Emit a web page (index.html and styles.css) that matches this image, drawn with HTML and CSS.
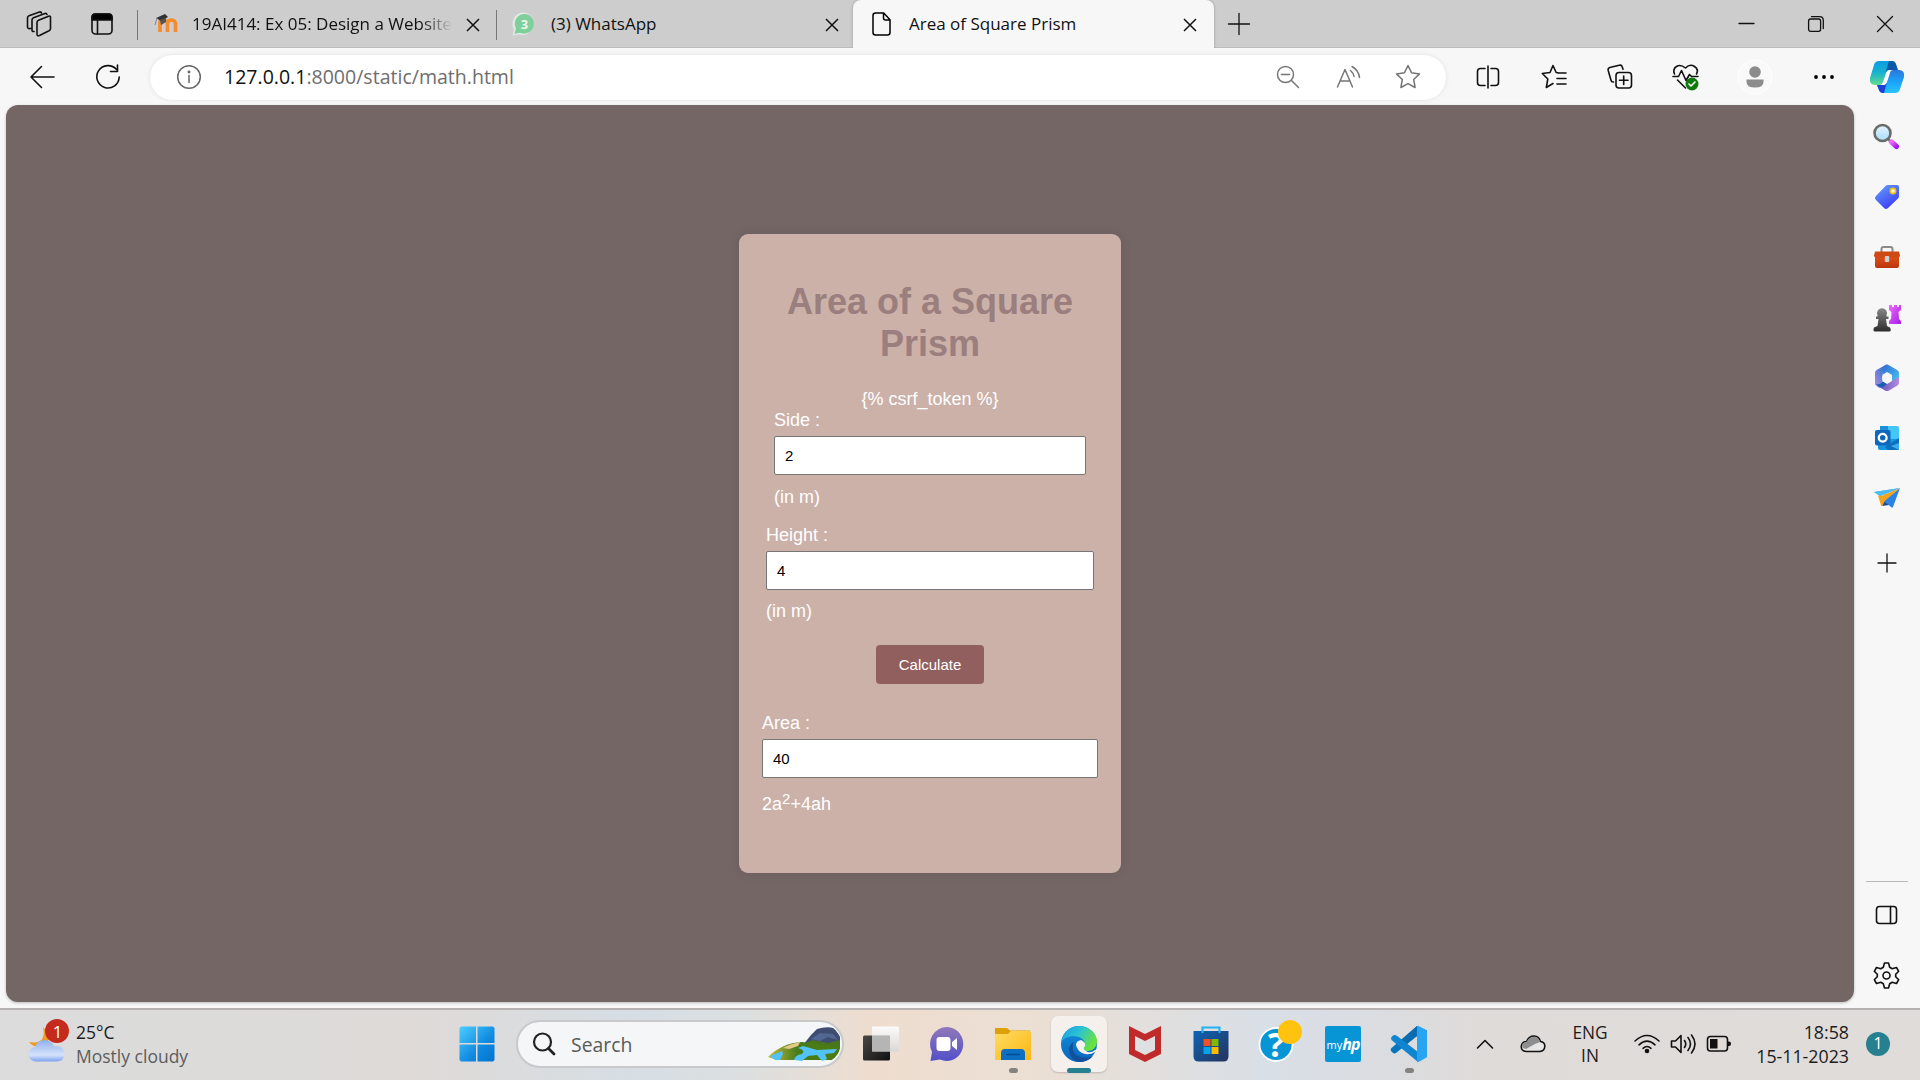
FILE: index.html
```html
<!DOCTYPE html>
<html lang="en">
<head>
<meta charset="utf-8">
<title>Area of Square Prism</title>
<link rel="stylesheet" href="styles.css">
</head>
<body>
<div class="screen">
  <header class="tabbar">
    <div class="cell"><svg width="26" height="26" viewBox="0 0 26 26" class="line"><path d="M11 11.500q0-1.500 1.500-2.200l10-4q2-.8 2 1.200v11q0 1.500-1.500 2.300l-9.500 4.700q-2.500 1-2.500-1.500z"/><path d="M8 20.500q-2 .3-2-1.500V9q0-1.500 1.500-2.200L19 2.500q1.500-.5 2 1M4.500 17.500Q1.500 18 1.500 16V7q0-1.500 1.500-2.200L13.500 1q1.500-.5 2 1"/></svg></div>
    <div class="cell"><svg width="24" height="24" viewBox="0 0 24 24" class="line"><rect x="2" y="2" width="20" height="20" rx="3.500"/><path d="M2 8V5q0-3 3-3h14q3 0 3 3v3z" fill="#000"/><path d="M7.500 8v14"/></svg></div>
    <div class="tab tab-first">
      <svg class="tab-icon" width="24" height="20" viewBox="0 0 24 20"><path d="M6 18V8q0-2 3-2t4.500 2v10M13.500 9q1-3 4-3t4 3v9" fill="none" stroke="#f58b2c" stroke-width="3.600"/><path d="M2 4l9-4 3 3-7 4z" fill="#333"/><path d="M3 4L1 11" stroke="#888" fill="none"/><path d="M6 6l1 5 5-3V4z" fill="#555"/></svg>
      <span class="tab-title fade">19AI414: Ex 05: Design a Website</span>
      <svg class="tab-close" width="14" height="14" viewBox="0 0 14 14"><path d="M1 1l12 12M13 1L1 13"/></svg>
    </div>
    <div class="tab tab-second">
      <svg class="tab-icon" width="24" height="24" viewBox="0 0 24 24"><path d="M12 .5A11.300 11.300 0 1 1 7 22.500L.5 23.500 2 17.500A11.300 11.300 0 0 1 12 .5z" fill="#e2e8e4"/><path d="M12.500 2A9.800 9.800 0 1 1 8 20.700L2.500 22 4 16.500A9.800 9.800 0 0 1 12.500 2z" fill="#7fcf9b"/><text x="12.500" y="17" class="wa-count">3</text></svg>
      <span class="tab-title">(3) WhatsApp</span>
      <svg class="tab-close" width="14" height="14" viewBox="0 0 14 14"><path d="M1 1l12 12M13 1L1 13"/></svg>
    </div>
    <div class="tab tab-active">
      <svg class="tab-icon" width="20" height="24" viewBox="0 0 20 24"><path d="M3.500 1h8.200L18 7.800v12.700q0 2.500-2.500 2.500h-12Q1 23 1 20.500v-17Q1 1 3.500 1zM11.500 1v5q0 2 2 2H18" fill="none" stroke="#000" stroke-width="1.500"/></svg>
      <span class="tab-title">Area of Square Prism</span>
      <svg class="tab-close" width="14" height="14" viewBox="0 0 14 14"><path d="M1 1l12 12M13 1L1 13"/></svg>
    </div>
    <div class="cell"><svg width="22" height="22" viewBox="0 0 22 22" class="line thin"><path d="M11 .5v21M.5 11h21"/></svg></div>
    <div></div>
    <div class="cell"><svg width="16" height="16" viewBox="0 0 16 16" class="line thin"><path d="M0 7.500h15"/></svg></div>
    <div class="cell"><svg width="16" height="16" viewBox="0 0 16 16" class="line thin"><rect x=".6" y="3" width="12" height="12.300" rx="2"/><path d="M3.500 .7h8q3.800 0 3.800 3.800v8"/></svg></div>
    <div class="cell"><svg width="16" height="16" viewBox="0 0 16 16" class="line thin"><path d="M.5.5l15 15M15.500.5l-15 15"/></svg></div>
  </header>

  <nav class="toolbar">
    <div class="cell"><svg width="26" height="24" viewBox="0 0 26 24" class="line"><path d="M12.500 1.500L2 12l10.500 10.500M2 12h23"/></svg></div>
    <div class="cell"><svg width="26" height="26" viewBox="0 0 26 26" class="line"><path d="M21.500 5.500A11.200 11.200 0 1 0 24.200 13M22.500 1v6.500h-7"/></svg></div>
    <div></div>
    <div class="address">
      <svg class="info" width="26" height="26" viewBox="0 0 26 26"><circle cx="13" cy="13" r="11.300"/><path d="M13 11.500v7"/><circle cx="13" cy="8" r=".7"/></svg>
      <span class="url"><b>127.0.0.1</b>:8000/static/math.html</span>
      <svg width="24" height="24" viewBox="0 0 24 24"><circle cx="9.500" cy="9.500" r="8"/><path d="M5.500 9.500h8M15.500 15.500l7 7"/></svg>
      <svg width="26" height="24" viewBox="0 0 26 24"><path d="M1.500 22L9 4.500 16.500 22M4 16h10M14.500 5.500q3 2.500 3.500 6M16 1.500q6.500 3.500 7.500 11"/></svg>
      <svg class="fav" width="26" height="26" viewBox="0 0 26 26"><path d="M13 1.500l3.500 7.200 8 1.200-5.800 5.600 1.400 8-7.100-3.800-7.100 3.800 1.400-8L1.500 9.900l8-1.200z"/></svg>
    </div>
    <div></div>
    <div class="cell"><svg width="24" height="24" viewBox="0 0 24 24" class="line"><path d="M9 3.500H4.500Q1.500 3.500 1.500 6.500v11q0 3 3 3H9M15 3.500h4.500q3 0 3 3v11q0 3-3 3H15M12 1v22"/></svg></div>
    <div class="cell"><svg width="26" height="26" viewBox="0 0 26 26" class="line"><path d="M17.500 9l-2.300-.5L12 1.500l-3 7-7.700 1 5.500 5.500-1.500 8.500L12 19.500M18 9h7M16 14.500h9M16 20h9"/></svg></div>
    <div class="cell"><svg width="26" height="26" viewBox="0 0 26 26" class="line"><rect x="9" y="8.500" width="15.500" height="15.500" rx="3"/><path d="M16.700 12v8.500M12.500 16.200H21M6.500 18q-2 .2-2.500-1.800L1.200 6.500q-.5-2.200 1.500-3l9.500-2.300q2.500-.5 3 1.500l.8 2.500"/></svg></div>
    <div class="cell"><svg width="28" height="28" viewBox="0 0 28 28" class="line"><path d="M2.500 11Q.5 6 4.500 3.500T13.500 5Q18 .5 22.500 3.500t2 7.500M1 13.500h5.500l3-6 4.500 10 3.500-6 2 2H26M5.500 17l8 8"/><circle cx="20" cy="21" r="6.500" fill="#12790f" stroke="none"/><path d="M17 21l2 2 4-4" stroke="#fff"/></svg></div>
    <div class="cell"><svg width="36" height="36" viewBox="0 0 36 36"><circle cx="18" cy="18" r="17" fill="#f9f9f9" stroke="#fff"/><circle cx="18" cy="13" r="5.800" fill="#8c8c8c"/><path d="M9.500 20.500h17v2.500q0 5.500-8.500 5.500T9.500 23z" fill="#8c8c8c"/></svg></div>
    <div class="cell"><svg width="22" height="6" viewBox="0 0 22 6"><circle cx="3" cy="3" r="1.900"/><circle cx="11" cy="3" r="1.900"/><circle cx="19" cy="3" r="1.900"/></svg></div>
    <div class="cell"><svg width="36" height="34" viewBox="0 0 36 34">
      <defs><linearGradient id="cpA" x1="0" y1="0" x2="0" y2="1"><stop offset="0" stop-color="#0b9de0"/><stop offset=".5" stop-color="#18b3cf"/><stop offset="1" stop-color="#63dc8b"/></linearGradient><linearGradient id="cpB" x1="0" y1="0" x2="0" y2="1"><stop offset="0" stop-color="#2d76dc"/><stop offset=".5" stop-color="#1aa2fa"/><stop offset="1" stop-color="#29c2ff"/></linearGradient></defs>
      <path d="M10 1h12q3 0 4 3l2 6h-8L15 25H6q-6 0-5-7L5 5q1-4 5-4z" fill="url(#cpA)"/>
      <path d="M20 1h3q3 0 4 3l2 6h-9q-3 0-4 4z" fill="#0b58a8"/>
      <path d="M26 33H14q-3 0-4-3l-2-5h8l5-15h9q6 0 5 7l-4 12q-1 4-5 4z" fill="url(#cpB)"/>
      <path d="M8 25h6q3 0 4-3l-3 11h-1q-3 0-4-3z" fill="#1b43d8"/>
      <path d="M22 10h-2q-2 0-3 3l-3 9q-1 3-3 3h4q2 0 3-3l3-9q.500-3 3-3z" fill="#fff"/></svg></div>
  </nav>

  <div class="middle">
    <main class="page">
      <form class="card">
        <h1>Area of a Square<br>Prism</h1>
        <div class="token">{% csrf_token %}</div>
        <div class="field side"><label for="a">Side :</label><input id="a" type="text" value="2"><span>(in m)</span></div>
        <div class="field height"><label for="h">Height :</label><input id="h" type="text" value="4"><span>(in m)</span></div>
        <button type="button">Calculate</button>
        <div class="field area"><label for="r">Area :</label><input id="r" type="text" value="40"><span>2a<sup>2</sup>+4ah</span></div>
      </form>
    </main>
    <aside class="sidebar">
      <svg width="28" height="28" viewBox="0 0 28 28"><defs><linearGradient id="pu" x1="0" y1="0" x2="1" y2="1"><stop offset="0" stop-color="#f06bfa"/><stop offset="1" stop-color="#a31de8"/></linearGradient><linearGradient id="lens" x1="0" y1="0" x2="0" y2="1"><stop offset="0" stop-color="#e4f4ff"/><stop offset="1" stop-color="#a9dbfa"/></linearGradient></defs><path d="M15 16l3 3" stroke="#777" stroke-width="2.500"/><circle cx="9.500" cy="10" r="8" fill="url(#lens)" stroke="#6a6a66" stroke-width="2.600"/><path d="M18.500 19l5 4.500" stroke="url(#pu)" stroke-width="5.200" stroke-linecap="round"/></svg>
      <svg width="28" height="28" viewBox="0 0 28 28"><defs><linearGradient id="tag" x1="0" y1="0" x2=".6" y2="1"><stop offset="0" stop-color="#62a6ff"/><stop offset="1" stop-color="#3f3cf5"/></linearGradient></defs><path d="M15 2h9q2 0 2 2v9q0 1.500-1 2.500L15 25q-2 2-4 0l-8-8q-2-2 0-4L12.500 3q1-1 2.500-1z" fill="url(#tag)"/><circle cx="20" cy="8" r="2.600" fill="#fff" stroke="#f4c20d" stroke-width="1.700"/></svg>
      <svg width="30" height="28" viewBox="0 0 30 28"><defs><linearGradient id="tb" x1="0" y1="0" x2="0" y2="1"><stop offset="0" stop-color="#e4521a"/><stop offset="1" stop-color="#b9350d"/></linearGradient></defs><path d="M9.500 9V6q0-2 2-2h7q2 0 2 2v3" fill="none" stroke="#8a8a8a" stroke-width="2"/><rect x="3" y="12" width="24" height="13" rx="2" fill="url(#tb)"/><path d="M3 8.500h24l1 4q0 2-2 2H4q-2 0-2-2z" fill="#cf4a13"/><rect x="12.800" y="13" width="4.400" height="6" rx="1" fill="#d0d0d0"/></svg>
      <svg width="30" height="30" viewBox="0 0 30 30"><defs><linearGradient id="pawn" x1="0" y1="0" x2="0" y2="1"><stop offset="0" stop-color="#888"/><stop offset="1" stop-color="#2c2c2c"/></linearGradient></defs><path d="M17 2h3v2h2V2h3v2h2V2h2v5l-2.500 2 .5 7 2 2v3H17v-3l2-2 .500-7L17 7z" fill="url(#pu)"/><path d="M5.500 13.500V12a4.900 4.900 0 1 1 9 0v1.500h2v2.500h-2.500l1 7 3 1.500q2 4-1 4H3q-2.500 0-1-4l3.500-1.500 1-7H4v-2.500z" fill="url(#pawn)"/></svg>
      <svg width="28" height="30" viewBox="0 0 28 30"><defs><linearGradient id="m3a" x1="0" y1="1" x2="1" y2="0"><stop offset="0" stop-color="#b48be0"/><stop offset=".5" stop-color="#5b7fd6"/><stop offset="1" stop-color="#2a63c4"/></linearGradient><linearGradient id="m3b" x1="0" y1="0" x2="1" y2="1"><stop offset="0" stop-color="#2d6fd0"/><stop offset="1" stop-color="#4fc8f5"/></linearGradient><linearGradient id="m3c" x1="0" y1="0" x2="1" y2="0"><stop offset="0" stop-color="#5c4fb4"/><stop offset="1" stop-color="#b58ade"/></linearGradient></defs><path d="M2 9.500q0-1.500 1.500-2.500l9-5q1.500-.8 3 0L9.500 10v12l-3 3-3-2Q2 22 2 20.500z" fill="url(#m3a)"/><path d="M12 2.300q2-1 4 0l8.500 5Q26 8.200 26 10v9q0 2-1.500 2.500L19 18v-6l-5-3-4.500 3V6z" fill="url(#m3b)"/><path d="M26 19.500q0 2-1.500 3l-8.500 5q-2 1-4 0l-8-5q3 1 5.500-1.500L14 21l5-3 7-4z" fill="url(#m3c)"/><path d="M3 21q4 1 7-2.500l4 2.500-4.500 3.500q-4 0-6.500-3.500z" fill="#1c5fb8"/><circle cx="14" cy="15" r="4.900" fill="#f7f7f7"/></svg>
      <svg width="28" height="28" viewBox="0 0 28 28"><path d="M7 2h17q2 0 2 2v11H7z" fill="#42c6f5"/><path d="M7 2h8v6H7z" fill="#1c8fd9"/><path d="M5 15h21v11H7q-2 0-2-2z" fill="#1795df"/><path d="M26 14v12H15l-3-3z" fill="#0b6fc0"/><path d="M18 22l8 4v-7z" fill="#39aee8"/><rect x="2" y="6" width="15.500" height="15.500" rx="2" fill="#0d68bd"/><circle cx="9.700" cy="13.800" r="3.900" fill="none" stroke="#fff" stroke-width="2.300"/></svg>
      <svg width="28" height="22" viewBox="0 0 28 22"><path d="M1 5L27 1 7 9z" fill="#49b9f2"/><path d="M27 1L20 20q-1 1-2 0l-7-6z" fill="#2b83e3"/><path d="M11 14l5 4-7 1z" fill="#164e9f"/><path d="M5 8.500l3 10q.5 1.500 1.500 0l2.500-5L27 1 8 9z" fill="#f2a31a"/><path d="M1 5l6 4L27 1z" fill="#4bbcf0"/></svg>
      <svg class="line thin add" width="20" height="20" viewBox="0 0 20 20"><path d="M10 1v18M1 10h18"/></svg>
      <hr>
      <svg class="line panel" width="24" height="20" viewBox="0 0 24 20"><rect x="1.500" y="1.500" width="20" height="17" rx="3"/><path d="M15.500 1.500v17"/></svg>
      <svg class="line gear" width="28" height="28" viewBox="0 0 28 28"><path d="M11.500 2h4l1.200 4.200 2.500 1.500 4.300-1.200 2.200 3.800-3 3v2.400l3 3-2.200 3.800-4.300-1.200-2.500 1.500-1.200 4.200h-4l-1.200-4.200-2.500-1.500-4.300 1.200-2.200-3.800 3-3v-2.400l-3-3 2.200-3.800 4.300 1.200 2.500-1.500z" stroke-linejoin="round"/><circle cx="13.500" cy="14.500" r="3.500"/></svg>
    </aside>
  </div>

  <footer class="taskbar">
    <div class="weather">
      <svg width="44" height="46" viewBox="0 0 44 46"><defs><linearGradient id="cl" x1="0" y1="0" x2="0" y2="1"><stop offset="0" stop-color="#8fb1ef"/><stop offset=".7" stop-color="#d5e2fb"/><stop offset="1" stop-color="#7ba2ee"/></linearGradient></defs><path d="M15 9q4 18-14 15 5 7 16 4l6-10z" fill="#ef9a24"/><path d="M8 43.500A7 7 0 0 1 7.500 29q1-7 9.500-7 6 0 9 6 10-1 10.500 7.500 0 8-8 8z" fill="url(#cl)"/><circle cx="29" cy="13" r="12" fill="#c42b1c"/><text x="29.500" y="19.500" class="badge-text">1</text></svg>
      <div class="weather-text"><span>25°C</span><span class="muted">Mostly cloudy</span></div>
    </div>
    <div class="start"><svg width="36" height="36" viewBox="0 0 36 36"><defs><linearGradient id="win" gradientUnits="userSpaceOnUse" x1="0" y1="0" x2="36" y2="36"><stop offset="0" stop-color="#4dcfff"/><stop offset=".6" stop-color="#1089e0"/><stop offset="1" stop-color="#0073d0"/></linearGradient></defs><path d="M2 .5h15v16.500H.5V2zM18.500.5H34L35.500 2v15h-17zM.5 18.500H17v17H2L.5 34zM18.500 18.500h17V34L34 35.500H18.500z" fill="url(#win)"/></svg></div>
    <div class="search">
      <svg width="24" height="24" viewBox="0 0 24 24"><circle cx="10.500" cy="10" r="8.500" fill="none" stroke="#222" stroke-width="2.200"/><path d="M16.500 16.500l5.500 5.500" stroke="#222" stroke-width="2.800" stroke-linecap="round"/></svg>
      <span>Search</span>
      <svg class="landscape" width="74" height="38" viewBox="0 0 74 38"><defs><linearGradient id="grass" x1="0" y1="0" x2="1" y2="0"><stop offset="0" stop-color="#c8b940"/><stop offset=".4" stop-color="#487d1a"/><stop offset="1" stop-color="#4c7a12"/></linearGradient></defs><path d="M36 20L44 10 50 4q9-3 17-1l6 8v12z" fill="#3f4d73"/><path d="M44 14l9-6 13 1 5 6-10-3-8 4z" fill="#536795"/><path d="M33 20l13-5 15 3 12-3v9z" fill="#49751e"/><path d="M1 32q14-14 34-15l38 5q0 7-7 13H10z" fill="url(#grass)"/><path d="M3 31l12-5 1 3-3 6H8zM27 35q1-5 8-6 4-4-4-6l5-2 14 4 20-1-3 4-9 1 2 5-5 2-5-6-9 1-6 5z" fill="#51c3f7"/><path d="M16 23q7-4 17-6l-2 4-9 3z" fill="#e4c98b"/></svg>
    </div>
    <div class="apps">
      <div class="app"><svg width="38" height="38" viewBox="0 0 38 38"><defs><linearGradient id="dk" x1="0" y1="0" x2="1" y2="1"><stop offset="0" stop-color="#4a4845"/><stop offset="1" stop-color="#111"/></linearGradient><linearGradient id="lt" x1="0" y1="0" x2="0" y2="1"><stop offset="0" stop-color="#fff"/><stop offset="1" stop-color="#d8d8d8"/></linearGradient></defs><rect x="1" y="10.500" width="27" height="25" rx="1.500" fill="url(#dk)"/><rect x="10" y="1.500" width="27" height="25" rx="1" fill="url(#lt)" opacity=".88"/><rect x="10" y="10.500" width="18" height="16" fill="#b5b5b5"/></svg></div>
      <div class="app"><svg width="36" height="36" viewBox="0 0 36 36"><defs><linearGradient id="chat" x1="0" y1="0" x2="0" y2="1"><stop offset="0" stop-color="#9078b8"/><stop offset="1" stop-color="#5350c8"/></linearGradient></defs><path d="M18 1a16.500 17 0 1 1-7 32.500L1.500 35 3 26A17 17 0 0 1 18 1z" fill="url(#chat)"/><rect x="7.500" y="11" width="14" height="14" rx="3" fill="#fff"/><path d="M23 16l5-4v12l-5-4z" fill="#fff"/></svg></div>
      <div class="app"><svg width="36" height="36" viewBox="0 0 36 36"><defs><linearGradient id="fd" x1="0" y1="0" x2="1" y2="1"><stop offset="0" stop-color="#ffdc62"/><stop offset="1" stop-color="#fbb614"/></linearGradient></defs><path d="M0 2h12l3 2.500h20v6H0z" fill="#dda006"/><path d="M0 8h13l3-3h18q2 0 2 2v27H0z" fill="url(#fd)"/><path d="M6 34V27q0-4 4-4h16q4 0 4 4v7z" fill="#0d6fc4"/><path d="M11 28.500h14" stroke="#064d8d" stroke-width="1.500"/></svg><i class="mark"></i></div>
      <div class="app current"><svg width="38" height="38" viewBox="0 0 38 38"><defs><linearGradient id="e1" x1="0" y1="0" x2="1" y2=".5"><stop offset="0" stop-color="#199ae0"/><stop offset=".5" stop-color="#2cc3d2"/><stop offset="1" stop-color="#6ae33b"/></linearGradient><linearGradient id="e2" x1="0" y1="0" x2="0" y2="1"><stop offset="0" stop-color="#1591df"/><stop offset="1" stop-color="#0864bb"/></linearGradient></defs><circle cx="19" cy="19" r="18" fill="url(#e2)"/><path d="M1.500 17C3 6 11 1 19 1c10 0 18 7 18 15 0 6-4 10-9 10-4 0-6-2-5-4 3-3 2-8-4-10-7-2-15 0-17.500 5z" fill="url(#e1)"/><path d="M13 19q-2 10 7 13 8 2 13-1-5 6-14 6Q10 35 9 25q0-7 8-10-4 1-4 4z" fill="#12509b"/><path d="M35 27q-6 4-13 1-5-3-6-8 0-4 5-5 5 2 4 6-3 3 1 5 4 3 9-1l3-1z" fill="#f5f1ec"/></svg><i class="mark"></i></div>
      <div class="app"><svg width="34" height="38" viewBox="0 0 34 38"><path d="M1 1l16 8 16-8v28l-16 8-16-8z" fill="#bf2b2b"/><path d="M7 11l10 5 10-5v14l-10 5-10-5z" fill="#dfe0e1"/></svg></div>
      <div class="app"><svg width="36" height="36" viewBox="0 0 36 36"><defs><linearGradient id="st" x1="0" y1="0" x2="1" y2="1"><stop offset="0" stop-color="#0c65b5"/><stop offset="1" stop-color="#26335c"/></linearGradient></defs><path d="M9.500 7V1.500h17V7" fill="none" stroke="#24b2f2" stroke-width="2.200"/><path d="M.5 5h35v25q0 5.500-5 5.500H5.500q-5 0-5-5.500z" fill="url(#st)"/><path d="M9.500 7V5M26.500 5v2" stroke="#24b2f2" stroke-width="2"/><path d="M10.500 13h7v7h-7z" fill="#f25022"/><path d="M18.500 13h7v7h-7z" fill="#7fba00"/><path d="M10.500 21h7v7h-7z" fill="#00a4ef"/><path d="M18.500 21h7v7h-7z" fill="#ffb900"/></svg></div>
      <div class="app help"><svg width="46" height="46" viewBox="0 0 46 46"><circle cx="23" cy="25.500" r="16.500" fill="#0895d6" stroke="#fff" stroke-width="1.800"/><text x="23" y="38" class="question">?</text><circle cx="37" cy="13" r="12" fill="#ffc20e"/></svg></div>
      <div class="app"><div class="hp"><span>my</span><b>hp</b></div></div>
      <div class="app"><svg width="38" height="38" viewBox="0 0 38 38"><path d="M27 1v10L6 28q-2 1-3.500-.5L1 26q-1-1.500.5-3z" fill="#0876bd"/><path d="M27 1v10L14 21 9 17z" fill="#0a6db0"/><path d="M1.500 15q-1-1.500 0-3L3 10.500q1.500-1 3.500 0L28 27v10z" fill="#1085d0"/><path d="M27 1l1-.200 9 4.500v27l-9 5-1-.5z" fill="#28a4f0"/></svg><i class="mark"></i></div>
    </div>
    <div class="tray">
      <svg width="18" height="12" viewBox="0 0 18 12" class="line"><path d="M1.500 10L9 2.500l7.500 7.500"/></svg>
      <svg width="26" height="20" viewBox="0 0 26 20"><path d="M6.500 17.500Q1 17 1.300 12.500 1.600 8 6.500 7.500 9 2 14 2q5 0 6.500 5.500 4.500.5 4.300 5-.3 4.500-5 5z" fill="#e6e6e6" stroke="#111" stroke-width="1.600"/><path d="M6.500 8Q9 3 14 3t6 5l-5 2-9 5q-4-1-4-3.500T6.500 8z" fill="#8e8e8e"/></svg>
      <div class="lang"><span>ENG</span><span>IN</span></div>
      <svg width="26" height="20" viewBox="0 0 26 20" class="line"><path d="M1 7Q13-4 25 7M5 10.800q8-7.300 16 0M9 14.300q4-3.600 8 0"/><circle cx="13" cy="17" r="1.500" fill="#111"/></svg>
      <svg width="26" height="22" viewBox="0 0 26 22" class="line"><path d="M1.500 8h4L11 2.500v17L5.500 14h-4zM14.500 7.500q2.500 3.500 0 7M18 4.500q5 6.500 0 13M21.500 2q7 9 0 18"/></svg>
      <svg width="26" height="18" viewBox="0 0 26 18" class="line"><rect x="1.500" y="1.500" width="20" height="14.500" rx="3"/><path d="M4 4h7.500v9.500H4z" fill="#111" stroke="none"/><path d="M22 6.500h1q2 0 2 2.300T23 11h-1z" fill="#111" stroke="none"/></svg>
      <div class="clock"><span>18:58</span><span>15-11-2023</span></div>
      <span class="notice">1</span>
    </div>
  </footer>
</div>
</body>
</html>
```

FILE: styles.css
```css
* { box-sizing: border-box; }
body { margin: 0; font-family: "Open Sans", "Noto Sans", sans-serif; color: #1b1b1b; overflow: hidden; }
svg { display: block; flex: none; overflow: visible; }
.screen { width: 1920px; height: 1080px; display: flex; flex-direction: column; background: #f7f7f7; }
.line { fill: none; stroke: #111; stroke-width: 1.6; stroke-linecap: round; stroke-linejoin: round; }
.thin { stroke-width: 1.3; }
.cell { display: flex; align-items: center; justify-content: center; }

/* tab strip */
.tabbar {
  height: 48px; flex: none; display: grid; background: #cdcdcd;
  grid-template-columns: 79px 46px 371px 357px 361px 51px 1fr 69px 69px 69px;
  box-shadow: inset 0 -1px #bdbdbd;
}
.tabbar > .cell { padding: 0 1px 1px 0; }
.tab { display: flex; align-items: center; position: relative; }
.tab-first { padding: 0 16px 0 29px; }
.tab-second { padding: 0 14px 0 16px; }
.tab-first::before, .tab-second::before { content: ""; position: absolute; top: 10px; width: 1px; height: 30px; background: #777; }
.tab-first::before { left: 12px; }
.tab-second::before { left: 0; }
.tab-active { background: #f7f7f7; border-radius: 8px 8px 0 0; padding: 0 17px 0 19px; box-shadow: 0 0 3px rgba(0,0,0,.25); clip-path: inset(0 -4px 0 -4px); }
.tab-icon { margin-right: 15px; }
.tab-active .tab-icon { margin-right: 17px; }
.tab-title { flex: 1; padding-bottom: 2px; font-size: 17px; white-space: nowrap; overflow: hidden; color: #111; }
.fade { flex: none; width: 260px; margin-left: -1px; margin-right: 14px; -webkit-mask-image: linear-gradient(90deg, #000 88%, transparent); mask-image: linear-gradient(90deg, #000 88%, transparent); }
.tab-close { margin-top: 1px; fill: none; stroke: #111; stroke-width: 1.5; }
.wa-count { font: bold 13px "Open Sans", sans-serif; fill: #eef7f0; text-anchor: middle; }

/* address row */
.toolbar {
  height: 57px; flex: none; display: grid; align-items: center;
  grid-template-columns: 84px 48px 18px 1296px 8px 67px 66px 66px 66px 72px 66px 60px;
}
.address { height: 45px; margin-top: 1px; border-radius: 23px; background: #fff; box-shadow: 0 0 5px rgba(0,0,0,.09); display: flex; align-items: center; padding: 0 25px 0 26px; gap: 36px; }
.address svg { fill: none; stroke: #767676; stroke-width: 1.5; stroke-linejoin: round; stroke-linecap: round; }
.address .info { margin-right: -14px; stroke: #666; }
.address .fav { margin-left: -3px; }
.url { flex: 1; padding-bottom: 1px; font-size: 19.55px; color: #6e6e6e; white-space: nowrap; }
.url b { font-weight: 400; color: #111; }

/* page and side rail */
.middle { height: 903px; flex: none; display: flex; }
.page { width: 1848px; height: 897px; margin-left: 6px; border-radius: 12px; background: #746665; display: flex; justify-content: center; align-items: flex-start; padding: 129px 0 0 0; box-shadow: 0 1px 3px rgba(0,0,0,.25); }
.card { width: 382px; height: 639px; border-radius: 9px; background: #ccb1a9; box-shadow: 0 0 11px rgba(0,0,0,.1); display: flex; flex-direction: column; align-items: center; padding-top: 47px; font: 18px/21px "Liberation Sans", Arial, sans-serif; color: #fff; }
.card h1 { margin: 0 0 24px; font-size: 36px; line-height: 42px; color: #9b7e7e; text-align: center; }
.field { display: flex; flex-direction: column; }
.field input { height: 39px; margin: 5px 0 12px; padding: 0 10px; border: 1px solid #767676; border-radius: 2px; background: #fff; font: 15px "Liberation Sans", Arial, sans-serif; color: #000; }
.side { width: 312px; }
.height { width: 328px; margin-top: 17px; }
.height input { margin-bottom: 11px; }
.area { width: 336px; margin-top: 29px; }
.area input { margin-bottom: 16px; }
.field sup { font-size: 15px; line-height: 0; vertical-align: 6px; }
.card button { width: 108px; height: 39px; margin-top: 23px; border: 0; border-radius: 4px; background: #91605e; color: #fff; font: 15px "Liberation Sans", Arial, sans-serif; }

.sidebar { width: 66px; padding-top: 2px; display: grid; grid-template-rows: repeat(7, 60.2px) 70px 284px 66px 54px; justify-items: center; align-items: center; align-content: start; }
.sidebar hr { width: 42px; height: 1px; margin: 0; border: 0; background: #b9b9b9; align-self: end; }

/* taskbar */
.taskbar {
  height: 72px; flex: none; display: flex; align-items: center; border-top: 2px solid #b5b2b1; padding: 0 0 2px 28px;
  background: linear-gradient(90deg, #dcdcdc 0, #dcdbda 280px, #dfdad7 410px, #d6dee4 630px, #dbdfe0 740px, #eeddcf 870px, #ebdfd4 1040px, #d9dfe6 1260px, #dadde2 1360px, #dfdbd9 1480px, #dfdcd9 100%);
}
.weather { display: flex; align-items: center; width: 431px; }
.weather svg { margin-top: -6px; }
.weather-text { display: flex; flex-direction: column; font-size: 17.5px; line-height: 24px; padding-left: 4px; }
.muted { color: #5d5d5d; }
.badge-text { font: 17px "Open Sans", sans-serif; fill: #fff; text-anchor: middle; }
.start { width: 57px; }
.search { width: 328px; height: 48px; border: 2px solid #c7c9ca; border-radius: 24px; background: #f5f6f7; display: flex; align-items: center; padding-left: 14px; font-size: 19.4px; color: #5a5a5a; }
.search span { flex: 1; padding-left: 15px; }
.search .landscape { margin-right: 1px; clip-path: inset(0 0 0 0 round 0 18px 20px 0); }
.apps { display: flex; margin-left: 4px; }
.app { width: 66px; height: 68px; display: flex; align-items: center; justify-content: center; position: relative; }
.mark { position: absolute; left: 29px; top: 58px; width: 9px; height: 5px; border-radius: 3px; background: #858280; }
.current::before { content: ""; position: absolute; left: 5px; top: 6px; width: 56px; height: 56px; border-radius: 7px; background: #f5f0ec; box-shadow: 0 1px 2px rgba(0,0,0,.18); }
.current svg { position: relative; }
.current .mark { left: 21px; width: 24px; background: #26808f; }
.help svg { margin: -5px 2px 0 0; }
.question { font: bold 34px "Open Sans", sans-serif; fill: #fff; text-anchor: middle; }
.hp { width: 36px; height: 36px; border-radius: 2px; background: #0895d6; color: #fff; display: flex; align-items: center; justify-content: center; font-size: 11px; line-height: 1; }
.hp b { font-size: 16px; font-style: italic; letter-spacing: -1px; }
.tray { flex: 1; display: flex; align-items: center; padding-left: 34px; font-size: 17.3px; line-height: 23px; }
.tray > svg + svg { margin-left: 10px; }
.tray > svg:nth-child(2) { margin-left: 26px; }
.lang { width: 88px; display: flex; flex-direction: column; align-items: center; }
.clock { width: 117px; display: flex; flex-direction: column; align-items: flex-end; font-size: 17.8px; line-height: 24px; }
.notice { width: 24px; height: 24px; margin-left: 17px; border-radius: 50%; background: #26808f; color: #fff; font-size: 16px; line-height: 23px; text-align: center; }
```
